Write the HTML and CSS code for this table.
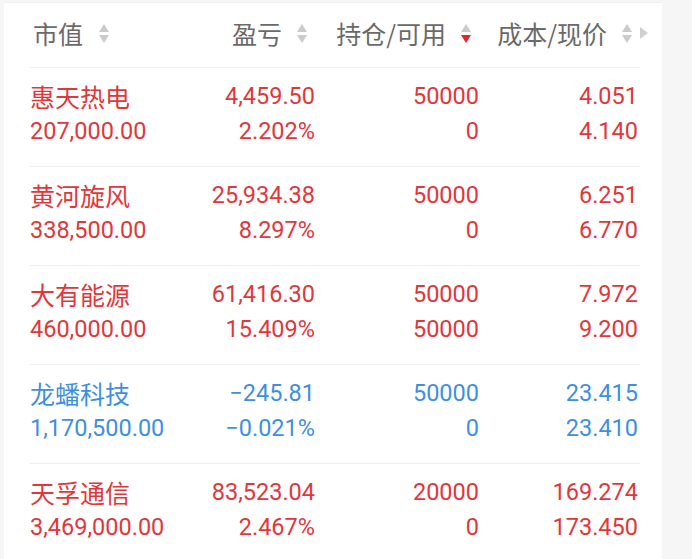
FILE: index.html
```html
<!DOCTYPE html>
<html lang="zh">
<head>
<meta charset="utf-8">
<link rel="stylesheet" href="styles.css">
</head>
<body>
<div class="card">
  <div class="head grid">
    <div class="hc left">市值<span class="sort"><i class="up"></i><i class="down"></i></span></div>
    <div class="hc">盈亏<span class="sort"><i class="up"></i><i class="down"></i></span></div>
    <div class="hc">持仓/可用<span class="sort"><i class="up"></i><i class="down active"></i></span></div>
    <div class="hc last">成本/现价<span class="sort"><i class="up"></i><i class="down"></i></span><span class="more"></span></div>
  </div>
  <div class="row grid red">
    <div class="c left"><div class="name">惠天热电</div><div>207,000.00</div></div>
    <div class="c"><div>4,459.50</div><div>2.202%</div></div>
    <div class="c"><div>50000</div><div>0</div></div>
    <div class="c"><div>4.051</div><div>4.140</div></div>
  </div>
  <div class="row grid red">
    <div class="c left"><div class="name">黄河旋风</div><div>338,500.00</div></div>
    <div class="c"><div>25,934.38</div><div>8.297%</div></div>
    <div class="c"><div>50000</div><div>0</div></div>
    <div class="c"><div>6.251</div><div>6.770</div></div>
  </div>
  <div class="row grid red">
    <div class="c left"><div class="name">大有能源</div><div>460,000.00</div></div>
    <div class="c"><div>61,416.30</div><div>15.409%</div></div>
    <div class="c"><div>50000</div><div>50000</div></div>
    <div class="c"><div>7.972</div><div>9.200</div></div>
  </div>
  <div class="row grid blue">
    <div class="c left"><div class="name">龙蟠科技</div><div>1,170,500.00</div></div>
    <div class="c"><div>−245.81</div><div>−0.021%</div></div>
    <div class="c"><div>50000</div><div>0</div></div>
    <div class="c"><div>23.415</div><div>23.410</div></div>
  </div>
  <div class="row grid red">
    <div class="c left"><div class="name">天孚通信</div><div>3,469,000.00</div></div>
    <div class="c"><div>83,523.04</div><div>2.467%</div></div>
    <div class="c"><div>20000</div><div>0</div></div>
    <div class="c"><div>169.274</div><div>173.450</div></div>
  </div>
</div>
</body>
</html>
```
FILE: styles.css
```css
html, body {
  margin: 0;
  padding: 0;
  background: #f6f6f6;
  width: 692px;
  height: 559px;
  overflow: hidden;
}
body {
  font-family: Roboto, "Noto Sans CJK SC", sans-serif;
}
.card {
  margin: 2px 0 0 4px;
  width: 658px;
  height: 557px;
  background: #fff;
  border-top: 1px solid #f0f0f0;
  box-sizing: border-box;
  padding: 0 22px 0 26px;
}
.grid {
  display: grid;
  grid-template-columns: 142px 145px 164px 159px;
}
.head {
  height: 65px;
  box-sizing: border-box;
  padding-bottom: 4px;
  align-items: center;
  border-bottom: 1px solid #eeeeee;
  color: #6a6a6a;
  font-size: 25px;
}
.hc {
  display: flex;
  align-items: center;
  justify-content: flex-end;
  padding-right: 10px;
  font-family: "Noto Sans CJK SC", sans-serif;
}
.hc.left {
  justify-content: flex-start;
  padding-left: 3px;
}
.hc.last {
  padding-right: 8px;
}
.sort {
  display: inline-flex;
  flex-direction: column;
  gap: 3px;
  margin-left: 15px;
}
.hc.left .sort { margin-left: 16px; }
.sort i {
  display: block;
  width: 0;
  height: 0;
  border-left: 5px solid transparent;
  border-right: 5px solid transparent;
}
.sort .up { border-bottom: 8px solid #cbcbcb; }
.sort .down { border-top: 8px solid #cbcbcb; }
.sort .down.active { border-top-color: #e0262c; }
.more {
  width: 0;
  height: 0;
  border-top: 6px solid transparent;
  border-bottom: 6px solid transparent;
  border-left: 8px solid #d0d0d0;
  margin-left: 8px;
  margin-right: -16px;
}
.row {
  height: 98px;
  box-sizing: content-box;
  border-bottom: 1px solid #eeeeee;
  font-size: 23.5px;
  align-content: center;
}
.row > .c {
  padding-bottom: 6px;
}
.c {
  display: flex;
  flex-direction: column;
  align-items: flex-end;
  gap: 8px;
  line-height: 27px;
  padding-right: 2px;
}
.c.left { align-items: flex-start; }
.name {
  font-family: "Noto Sans CJK SC", sans-serif;
  font-size: 25px;
}
.red { color: #e1373b; }
.blue { color: #3f8fdf; }
```
